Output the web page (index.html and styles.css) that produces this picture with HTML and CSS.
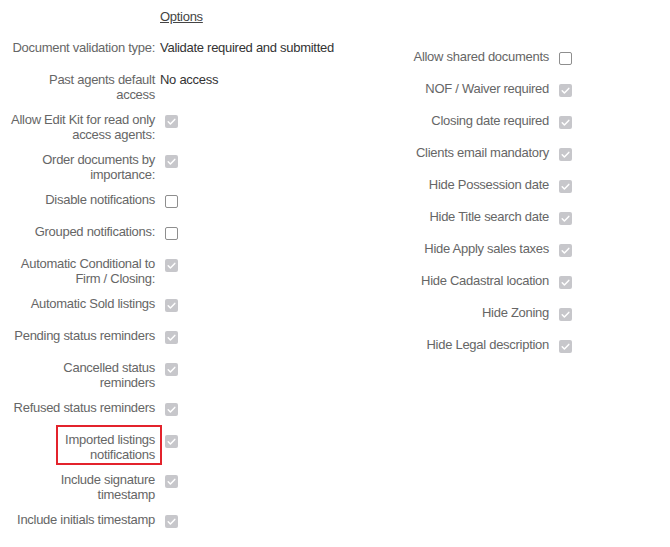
FILE: index.html
```html
<!DOCTYPE html>
<html lang="en">
<head>
<meta charset="utf-8">
<title>Options</title>
<link rel="stylesheet" href="styles.css">
</head>
<body>
<div class="page">
  <div class="col col-left">
    <div class="row">
      <div class="label"></div>
      <div class="value heading">Options</div>
    </div>
    <div class="row">
      <div class="label">Document validation type:</div>
      <div class="value text">Validate required and submitted</div>
    </div>
    <div class="row">
      <div class="label">Past agents default access</div>
      <div class="value text">No access</div>
    </div>
    <div class="row">
      <div class="label">Allow Edit Kit for read only access agents:</div>
      <div class="value"><span class="cb on"><svg viewBox="0 0 13 13"><path d="M3.2 6.8 L5.4 9 L9.8 4.4"/></svg></span></div>
    </div>
    <div class="row">
      <div class="label">Order documents by importance:</div>
      <div class="value"><span class="cb on"><svg viewBox="0 0 13 13"><path d="M3.2 6.8 L5.4 9 L9.8 4.4"/></svg></span></div>
    </div>
    <div class="row">
      <div class="label">Disable notifications</div>
      <div class="value"><span class="cb off"></span></div>
    </div>
    <div class="row">
      <div class="label">Grouped notifications:</div>
      <div class="value"><span class="cb off"></span></div>
    </div>
    <div class="row">
      <div class="label">Automatic Conditional to Firm / Closing:</div>
      <div class="value"><span class="cb on"><svg viewBox="0 0 13 13"><path d="M3.2 6.8 L5.4 9 L9.8 4.4"/></svg></span></div>
    </div>
    <div class="row">
      <div class="label">Automatic Sold listings</div>
      <div class="value"><span class="cb on"><svg viewBox="0 0 13 13"><path d="M3.2 6.8 L5.4 9 L9.8 4.4"/></svg></span></div>
    </div>
    <div class="row">
      <div class="label">Pending status reminders</div>
      <div class="value"><span class="cb on"><svg viewBox="0 0 13 13"><path d="M3.2 6.8 L5.4 9 L9.8 4.4"/></svg></span></div>
    </div>
    <div class="row">
      <div class="label">Cancelled status reminders</div>
      <div class="value"><span class="cb on"><svg viewBox="0 0 13 13"><path d="M3.2 6.8 L5.4 9 L9.8 4.4"/></svg></span></div>
    </div>
    <div class="row">
      <div class="label">Refused status reminders</div>
      <div class="value"><span class="cb on"><svg viewBox="0 0 13 13"><path d="M3.2 6.8 L5.4 9 L9.8 4.4"/></svg></span></div>
    </div>
    <div class="row">
      <div class="label"><span class="marked">Imported listings<br>notifications</span></div>
      <div class="value"><span class="cb on"><svg viewBox="0 0 13 13"><path d="M3.2 6.8 L5.4 9 L9.8 4.4"/></svg></span></div>
    </div>
    <div class="row">
      <div class="label">Include signature timestamp</div>
      <div class="value"><span class="cb on"><svg viewBox="0 0 13 13"><path d="M3.2 6.8 L5.4 9 L9.8 4.4"/></svg></span></div>
    </div>
    <div class="row">
      <div class="label">Include initials timestamp</div>
      <div class="value"><span class="cb on"><svg viewBox="0 0 13 13"><path d="M3.2 6.8 L5.4 9 L9.8 4.4"/></svg></span></div>
    </div>
  </div>
  <div class="col col-right">
    <div class="row">
      <div class="label">Allow shared documents</div>
      <div class="value"><span class="cb off"></span></div>
    </div>
    <div class="row">
      <div class="label">NOF / Waiver required</div>
      <div class="value"><span class="cb on"><svg viewBox="0 0 13 13"><path d="M3.2 6.8 L5.4 9 L9.8 4.4"/></svg></span></div>
    </div>
    <div class="row">
      <div class="label">Closing date required</div>
      <div class="value"><span class="cb on"><svg viewBox="0 0 13 13"><path d="M3.2 6.8 L5.4 9 L9.8 4.4"/></svg></span></div>
    </div>
    <div class="row">
      <div class="label">Clients email mandatory</div>
      <div class="value"><span class="cb on"><svg viewBox="0 0 13 13"><path d="M3.2 6.8 L5.4 9 L9.8 4.4"/></svg></span></div>
    </div>
    <div class="row">
      <div class="label">Hide Possession date</div>
      <div class="value"><span class="cb on"><svg viewBox="0 0 13 13"><path d="M3.2 6.8 L5.4 9 L9.8 4.4"/></svg></span></div>
    </div>
    <div class="row">
      <div class="label">Hide Title search date</div>
      <div class="value"><span class="cb on"><svg viewBox="0 0 13 13"><path d="M3.2 6.8 L5.4 9 L9.8 4.4"/></svg></span></div>
    </div>
    <div class="row">
      <div class="label">Hide Apply sales taxes</div>
      <div class="value"><span class="cb on"><svg viewBox="0 0 13 13"><path d="M3.2 6.8 L5.4 9 L9.8 4.4"/></svg></span></div>
    </div>
    <div class="row">
      <div class="label">Hide Cadastral location</div>
      <div class="value"><span class="cb on"><svg viewBox="0 0 13 13"><path d="M3.2 6.8 L5.4 9 L9.8 4.4"/></svg></span></div>
    </div>
    <div class="row">
      <div class="label">Hide Zoning</div>
      <div class="value"><span class="cb on"><svg viewBox="0 0 13 13"><path d="M3.2 6.8 L5.4 9 L9.8 4.4"/></svg></span></div>
    </div>
    <div class="row">
      <div class="label">Hide Legal description</div>
      <div class="value"><span class="cb on"><svg viewBox="0 0 13 13"><path d="M3.2 6.8 L5.4 9 L9.8 4.4"/></svg></span></div>
    </div>
  </div>
</div>
</body>
</html>
```

FILE: styles.css
```css
html, body {
  margin: 0;
  padding: 0;
  background: #ffffff;
}

body {
  font-family: "Liberation Sans", Arial, sans-serif;
  font-size: 13px;
  line-height: 15px;
  letter-spacing: -0.28px;
  color: #666666;
}

.page {
  display: grid;
  grid-template-columns: 404px 1fr;
  padding-top: 8px;
}

.col-left {
  padding-left: 10px;
}

.col-right {
  padding-top: 41px;
}

.row {
  display: flex;
  align-items: flex-start;
  min-height: 22px;
  margin-bottom: 10px;
}

.label {
  width: 145px;
  flex: none;
  text-align: right;
  color: #666666;
}

.value {
  margin-left: 5px;
  display: flex;
  align-items: flex-start;
}

.text {
  color: #333333;
}

.heading {
  color: #444444;
  text-decoration: underline;
  padding-top: 1px;
}

.cb {
  display: block;
  width: 13px;
  height: 13px;
  box-sizing: border-box;
  border-radius: 2px;
  margin: 3px 0 0 5px;
}

.cb.on {
  background: #c7c7cb;
}

.cb.on svg {
  display: block;
  width: 13px;
  height: 13px;
}

.cb.on path {
  fill: none;
  stroke: #ffffff;
  stroke-width: 1.5;
  stroke-linecap: round;
  stroke-linejoin: round;
}

.cb.off {
  background: #ffffff;
  border: 1px solid #8e8e8e;
}

.marked {
  position: relative;
  display: inline-block;
}

.marked::after {
  content: "";
  position: absolute;
  top: -7px;
  bottom: -3px;
  left: -9px;
  right: -7px;
  border: 2px solid #e3232c;
}
```
